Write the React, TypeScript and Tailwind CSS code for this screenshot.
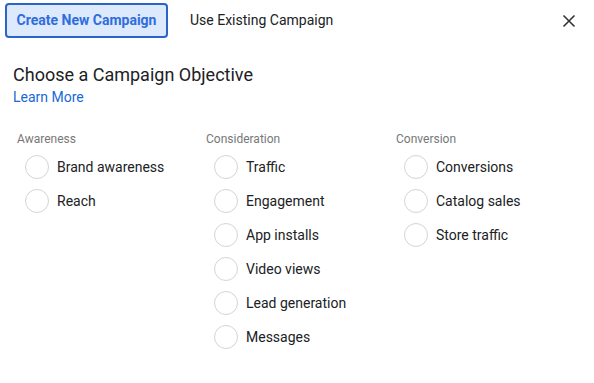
const columns = [
  { title: "Awareness", items: ["Brand awareness", "Reach"] },
  {
    title: "Consideration",
    items: ["Traffic", "Engagement", "App installs", "Video views", "Lead generation", "Messages"],
  },
  { title: "Conversion", items: ["Conversions", "Catalog sales", "Store traffic"] },
]

export default function App() {
  return (
    <div className="h-[383px] w-[594px] bg-white font-['Roboto',sans-serif] text-[#202124]">
      {/* tabs */}
      <div className="flex items-center pl-[5px] pr-[17px] pt-[3px]">
        <button className="h-[35px] w-[163px] rounded-[4px] border-2 border-[#2a64c8] bg-[#dde9fc] bg-[radial-gradient(#c3d5f3_0.7px,transparent_0.7px)] bg-[length:4px_4px] text-[14px] font-bold text-[#2f6ddc]">
          Create New Campaign
        </button>
        <span className="ml-[22px] text-[14px]">Use Existing Campaign</span>
        <button className="ml-auto text-[#333]">
          <svg width="16" height="16" viewBox="0 0 16 16" fill="none" stroke="currentColor" strokeWidth="1.6">
            <path d="M2.5 2.5l11 11M13.5 2.5l-11 11" />
          </svg>
        </button>
      </div>

      <div className="px-[13px]">
        <h2 className="mt-[25px] text-[18px] leading-[24px]">Choose a Campaign Objective</h2>
        <a className="block text-[14px] leading-[20px] text-[#1a68d6]">Learn More</a>
      </div>

      <div className="mt-[24px] grid grid-cols-[189px_190px_190px] pl-[17px]">
        {columns.map((col) => (
          <div key={col.title}>
            <p className="text-[12px] leading-[16px] text-[#777]">{col.title}</p>
            <div className="mt-[3px]">
              {col.items.map((item) => (
                <label key={item} className="flex h-[34px] items-center gap-[8px] pl-[8px] text-[14px]">
                  <span className="h-[24px] w-[24px] shrink-0 rounded-full border border-[#d4d4d4] bg-white" />
                  {item}
                </label>
              ))}
            </div>
          </div>
        ))}
      </div>
    </div>
  )
}
